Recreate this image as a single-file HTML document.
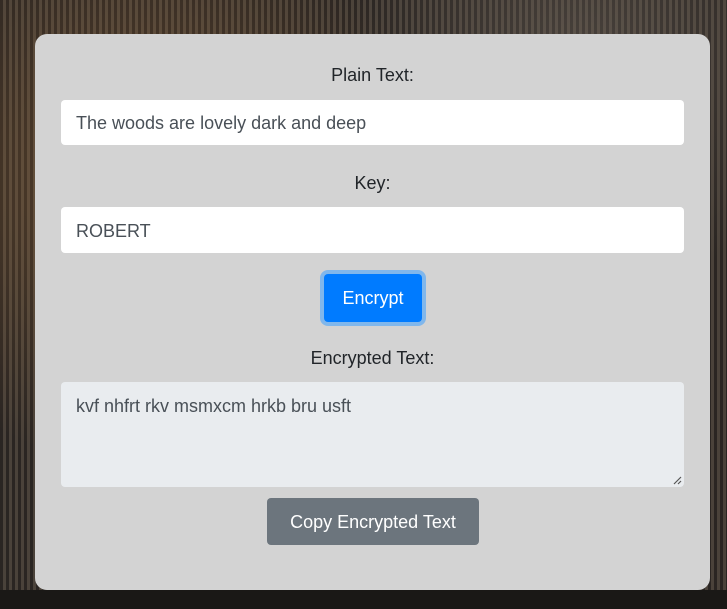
<!DOCTYPE html>
<html><head><style>
html,body{margin:0;width:727px;height:609px;overflow:hidden}
body{background:
radial-gradient(circle at 20% 30%,rgba(180,120,60,.35),transparent 40%),
radial-gradient(circle at 80% 10%,rgba(120,110,100,.4),transparent 30%),
repeating-linear-gradient(90deg,#2a2522 0 3px,#4a423a 3px 6px),
#1e1a18;font-family:"Liberation Sans",sans-serif;position:relative}
.bot{position:absolute;left:0;top:590px;width:727px;height:19px;background:#1a1816}
.card{position:absolute;left:35px;top:34px;width:675px;height:556px;background:#d3d3d3;border-radius:12px}
.lbl{position:absolute;left:0;width:675px;text-align:center;font-size:18px;color:#212529}
.in{position:absolute;left:26px;width:623px;padding-left:15px;box-sizing:border-box;background:#fff;border-radius:4px;font-size:18px;color:#495057}
.btn{position:absolute;color:#fff;font-size:18px;text-align:center;border-radius:4px}
</style></head><body>
<div class="bot"></div>
<div class="card">
<div class="lbl" style="top:31px">Plain Text:</div>
<div class="in" style="top:66px;height:45px;line-height:47px">The woods are lovely dark and deep</div>
<div class="lbl" style="top:139px">Key:</div>
<div class="in" style="top:173px;height:46px;line-height:48px">ROBERT</div>
<div class="btn" style="left:289px;top:240px;width:98px;height:48px;line-height:49px;background:#007bff;box-shadow:0 0 0 4px #80b7ec">Encrypt</div>
<div class="lbl" style="top:314px">Encrypted Text:</div>
<div class="in" style="top:348px;height:105px;line-height:20px;padding-top:14px;background:#e9ecef">kvf nhfrt rkv msmxcm hrkb bru usft
<svg style="position:absolute;right:2px;bottom:2px" width="10" height="10"><path d="M2 9L9 2M6 9L9 6" stroke="#555" stroke-width="1.2"/></svg></div>
<div class="btn" style="left:232px;top:464px;width:212px;height:47px;line-height:48px;background:#6c757d">Copy Encrypted Text</div>
</div>
</body></html>
